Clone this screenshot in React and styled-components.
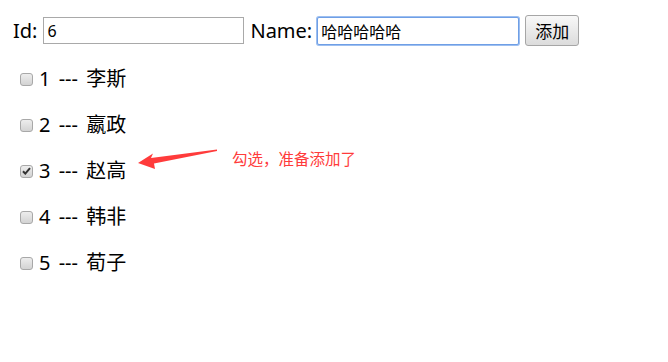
import React, { useState } from "react";
import styled, { createGlobalStyle } from "styled-components";

const GlobalStyle = createGlobalStyle`
  html, body {
    margin: 0;
    padding: 0;
    background: #fff;
  }
  body {
    font-family: "Noto Sans", "Noto Sans CJK SC", sans-serif;
    color: #000;
  }
`;

const people = [
  { id: 1, name: "李斯", checked: false },
  { id: 2, name: "嬴政", checked: false },
  { id: 3, name: "赵高", checked: true },
  { id: 4, name: "韩非", checked: false },
  { id: 5, name: "荀子", checked: false },
];

const Check = () => (
  <svg width="9" height="8" viewBox="0 0 9 8">
    <path d="M1 4.2l2.3 2.4L8 1.2" fill="none" stroke="#333" strokeWidth="2" />
  </svg>
);

const Arrow = () => (
  <svg width="90" height="30" viewBox="0 0 90 30">
    <polygon
      fill="#ff3b3b"
      points="0,15 15,5.5 13,10 79,1.5 79,3 16,15.5 17,21"
    />
  </svg>
);

const App = () => {
  const [list, setList] = useState(people);

  const toggle = (id) =>
    setList((items) =>
      items.map((p) => (p.id === id ? { ...p, checked: !p.checked } : p))
    );

  return (
    <Page>
      <GlobalStyle />
      <Toolbar>
        <Label space={6}>Id:</Label>
        <TextInput defaultValue="6" />
        <Label space={5}>Name:</Label>
        <TextInput defaultValue="哈哈哈哈哈" focused />
        <AddButton>添加</AddButton>
      </Toolbar>
      <List>
        {list.map((p) => (
          <Row key={p.id}>
            <CheckWrap>
              <CheckBox
                type="checkbox"
                checked={p.checked}
                onChange={() => toggle(p.id)}
              />
              {p.checked && (
                <CheckMark>
                  <Check />
                </CheckMark>
              )}
            </CheckWrap>
            <ItemText>
              {p.id} --- {p.name}
            </ItemText>
          </Row>
        ))}
      </List>
      <Note>
        <Arrow />
        <NoteText>勾选，准备添加了</NoteText>
      </Note>
    </Page>
  );
};

const Page = styled.div`
  position: relative;
  width: 668px;
  height: 362px;
  padding: 15px 13px 0;
  box-sizing: border-box;
`;

const Toolbar = styled.div`
  display: flex;
  align-items: center;
  height: 31px;
`;

const Label = styled.span`
  font-size: 20px;
  line-height: 1;
  margin-right: ${(p) => p.space}px;
`;

const TextInput = styled.input`
  box-sizing: border-box;
  width: ${(p) => (p.focused ? "202px" : "201px")};
  height: ${(p) => (p.focused ? "28px" : "27px")};
  margin-right: 6px;
  padding: 0 3px;
  font-family: "Noto Sans", "Noto Sans CJK SC", sans-serif;
  font-size: 16px;
  color: #000;
  border: 1px solid ${(p) => (p.focused ? "#6f9fe6" : "#a9a9a9")};
  box-shadow: ${(p) => (p.focused ? "0 0 0 1px #9dbff0" : "none")};
  border-radius: ${(p) => (p.focused ? "2px" : "0")};
  outline: none;
`;

const AddButton = styled.button`
  box-sizing: border-box;
  width: 54px;
  height: 31px;
  font-family: "Noto Sans CJK SC", sans-serif;
  font-size: 17px;
  color: #000;
  background: linear-gradient(#f8f8f8, #dcdcdc);
  border: 1px solid #a6a6a6;
  border-radius: 3px;
  padding: 0;
`;

const List = styled.div`
  margin-top: 10px;
  display: flex;
  flex-direction: column;
`;

const Row = styled.label`
  display: flex;
  align-items: center;
  height: 46px;
  padding-left: 7px;
  gap: 6px;
`;

const CheckWrap = styled.span`
  position: relative;
  display: inline-flex;
  width: 13px;
  height: 13px;
`;

const CheckBox = styled.input`
  appearance: none;
  margin: 0;
  width: 13px;
  height: 13px;
  box-sizing: border-box;
  border: 1px solid #a8a8a8;
  border-radius: 3px;
  background: linear-gradient(#ededed, #d3d3d3);
`;

const CheckMark = styled.span`
  position: absolute;
  left: 2px;
  top: 2px;
  pointer-events: none;
  line-height: 0;
`;

const ItemText = styled.span`
  font-size: 20px;
  line-height: 1;
  word-spacing: 3px;
`;

const Note = styled.div`
  position: absolute;
  left: 138px;
  top: 148px;
  display: flex;
  align-items: flex-start;
`;

const NoteText = styled.span`
  margin-left: 4px;
  font-family: "Noto Sans CJK SC", sans-serif;
  font-size: 15.5px;
  line-height: 20px;
  color: #ff3b3b;
`;

export default App;
